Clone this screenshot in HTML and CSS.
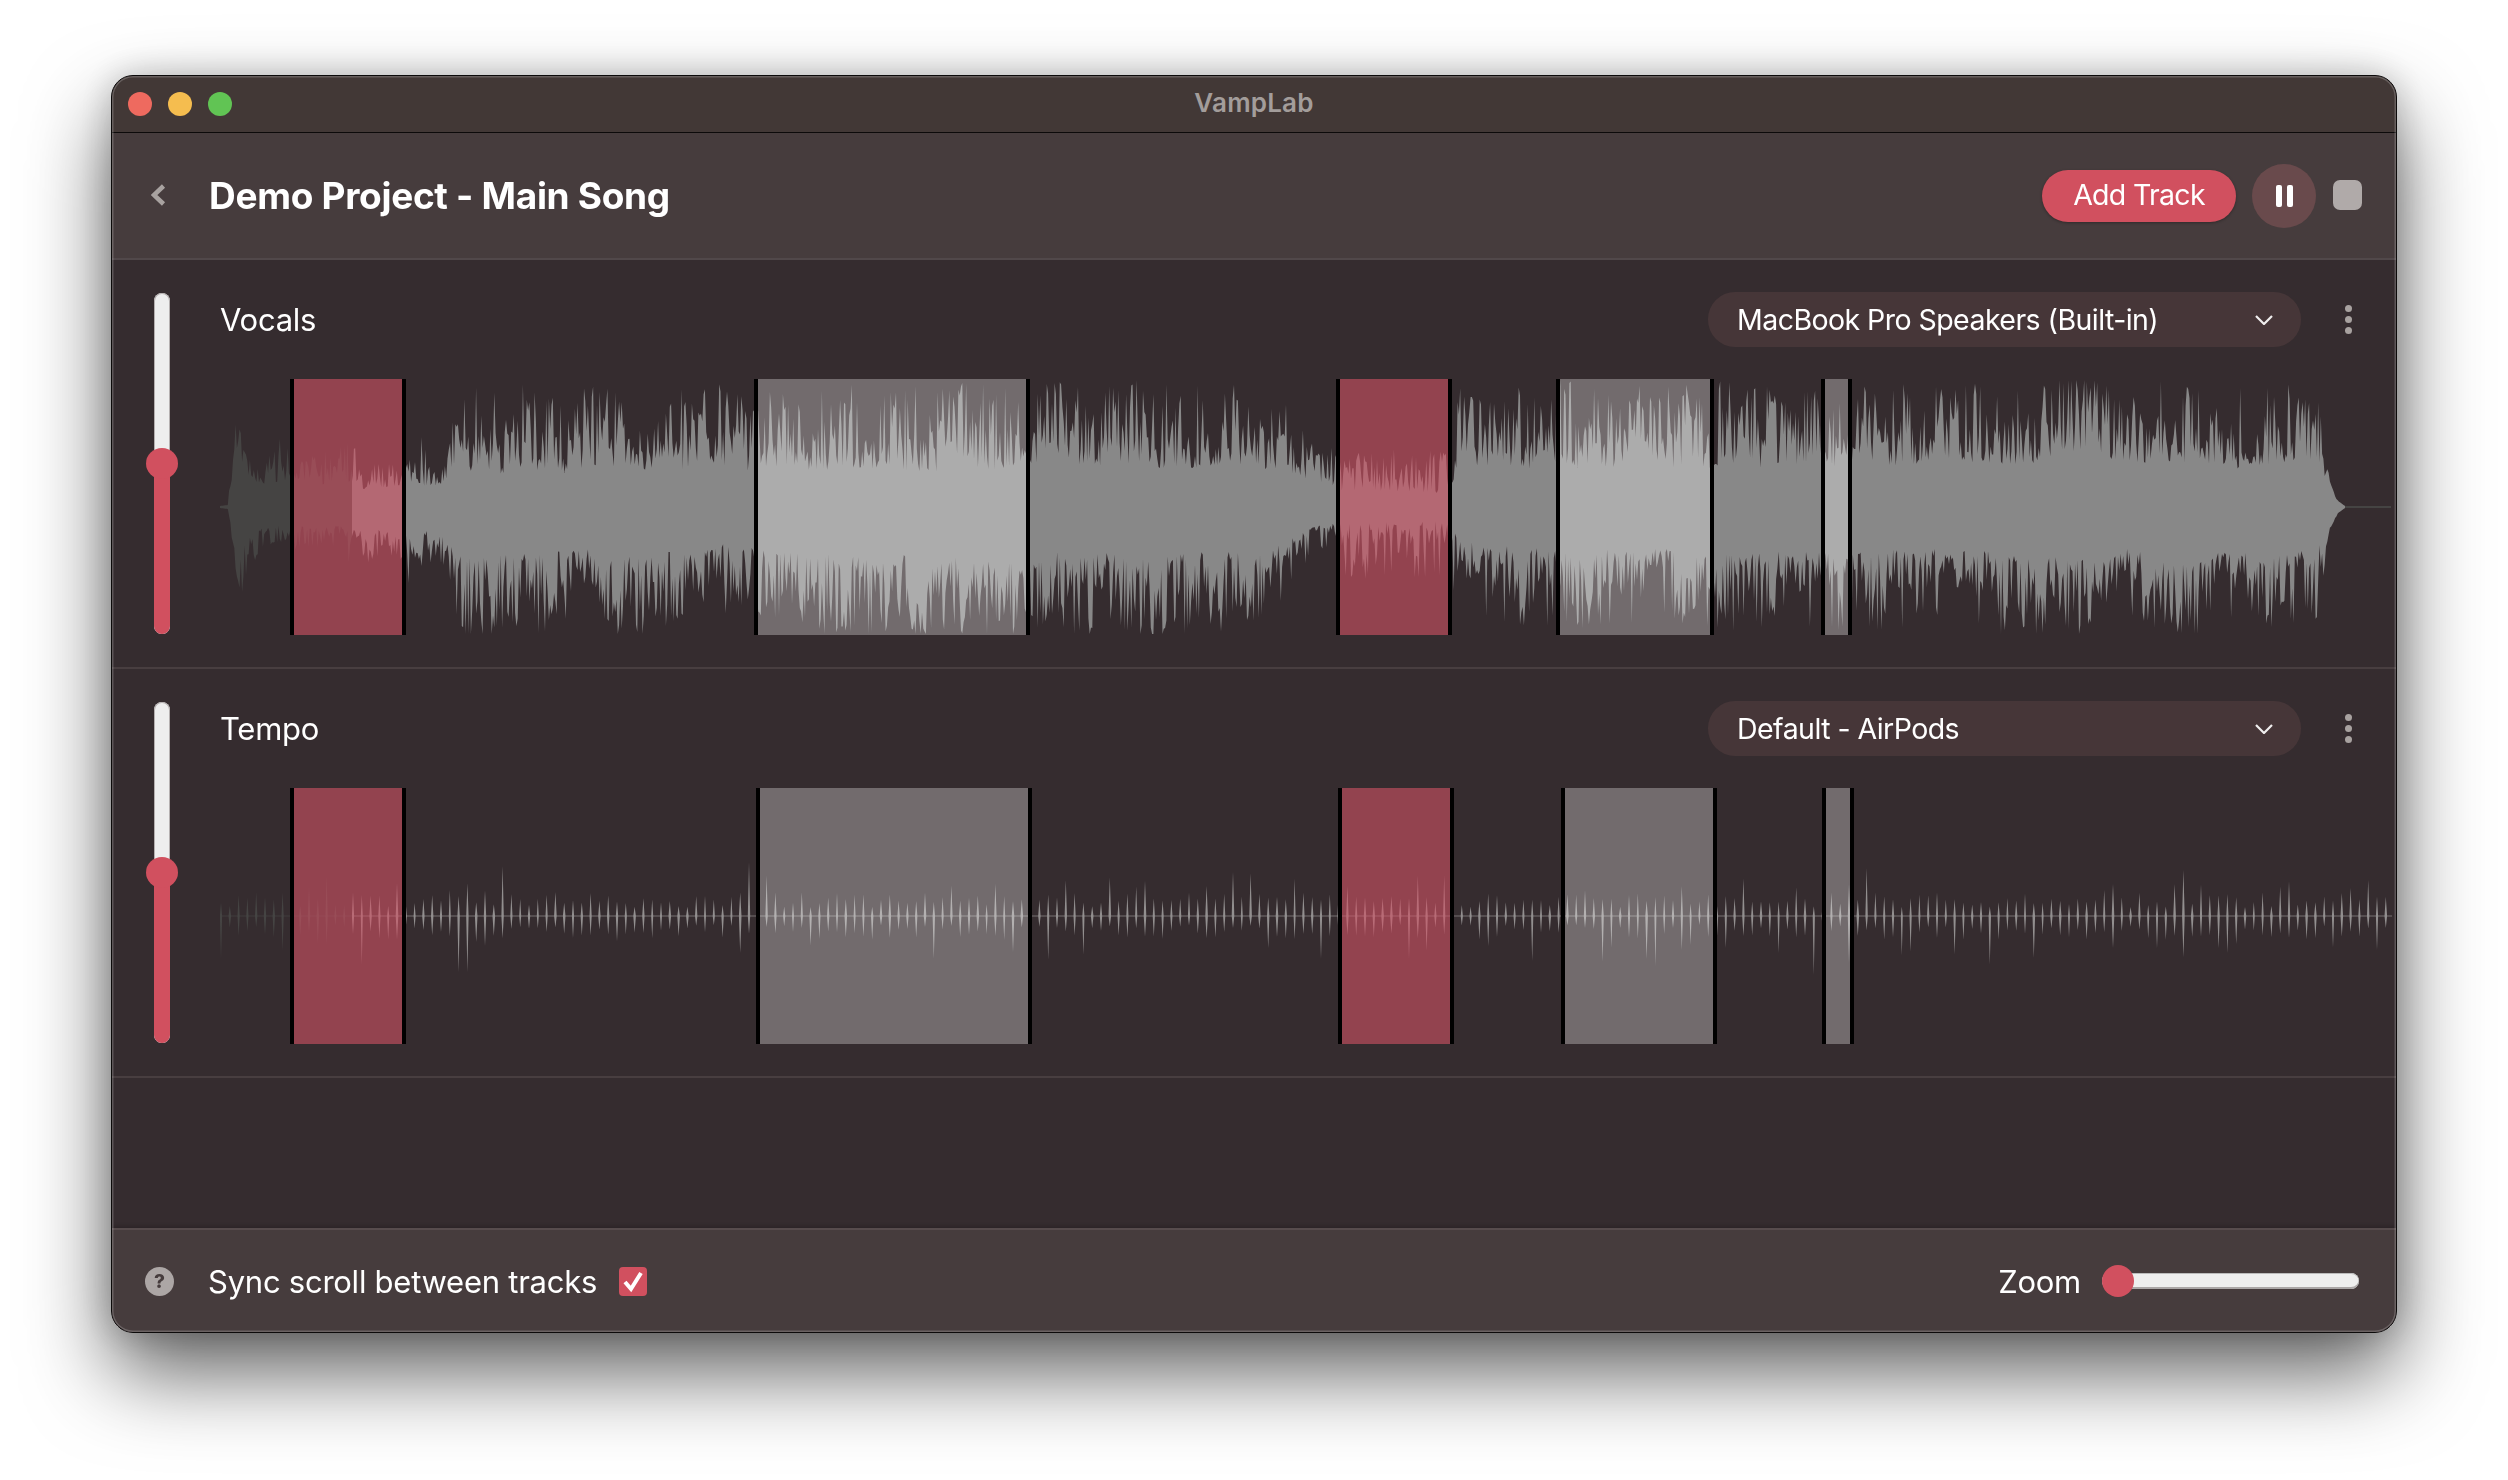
FILE: index.html
```html
<!DOCTYPE html>
<html lang="en">
<head>
<meta charset="utf-8">
<title>VampLab</title>
<link rel="stylesheet" href="styles.css">
</head>
<body>
<main class="window">
  <div class="titlebar">
    <div class="lights"><span class="light red"></span><span class="light yellow"></span><span class="light green"></span></div>
    <div class="app-name">VampLab</div>
    <div></div>
  </div>
  <header class="header">
    <svg class="back" viewBox="0 0 15 22" aria-hidden="true"><path d="M12.5 2 L3 11 L12.5 20"/></svg>
    <h1 class="title">Demo Project - Main Song</h1>
    <button class="add-track">Add Track</button>
    <button class="pause"><span class="pause-bar"></span><span class="pause-bar"></span></button>
    <div class="stop"></div>
  </header>
  <section class="tracks">
    <article class="track">
      <div class="vslider"><div class="vfill"></div><div class="vthumb"></div></div>
      <div class="track-body">
        <div class="track-head">
          <div class="track-name">Vocals</div>
          <div class="select"><span>MacBook Pro Speakers (Built-in)</span>
            <svg class="caret" viewBox="0 0 18 10" aria-hidden="true"><path d="M1 1 L9 9 L17 1"/></svg></div>
          <div class="kebab"><i></i><i></i><i></i></div>
        </div>
        <div class="wave">
          <svg class="wave-svg" id="wave-vocals" width="2172" height="256" viewBox="0 0 2172 256"></svg>
          <div class="region hot" style="left:70px;width:116px"></div>
          <div class="region" style="left:534px;width:276px"></div>
          <div class="region hot" style="left:1116px;width:116px"></div>
          <div class="region" style="left:1336px;width:158px"></div>
          <div class="region" style="left:1601px;width:31px"></div>
        </div>
      </div>
    </article>
    <article class="track">
      <div class="vslider"><div class="vfill"></div><div class="vthumb"></div></div>
      <div class="track-body">
        <div class="track-head">
          <div class="track-name">Tempo</div>
          <div class="select"><span>Default - AirPods</span>
            <svg class="caret" viewBox="0 0 18 10" aria-hidden="true"><path d="M1 1 L9 9 L17 1"/></svg></div>
          <div class="kebab"><i></i><i></i><i></i></div>
        </div>
        <div class="wave">
          <svg class="wave-svg" id="wave-tempo" width="2172" height="256" viewBox="0 0 2172 256"></svg>
          <div class="region hot" style="left:70px;width:116px"></div>
          <div class="region" style="left:536px;width:276px"></div>
          <div class="region hot" style="left:1118px;width:116px"></div>
          <div class="region" style="left:1341px;width:156px"></div>
          <div class="region" style="left:1602px;width:32px"></div>
        </div>
      </div>
    </article>
  </section>
  <footer class="footer">
    <div class="help">?</div>
    <div class="sync">Sync scroll between tracks</div>
    <div class="check"><svg viewBox="0 0 28 29" aria-hidden="true"><path d="M6 15 L12 22 L22 6"/></svg></div>
    <div class="zoom-label">Zoom</div>
    <div class="hslider"><div class="hthumb"></div></div>
  </footer>
</main>
<script src="script.js"></script>
</body>
</html>
```
FILE: styles.css
```css
* { box-sizing: border-box; }
html, body { margin: 0; height: 100%; background: #fff; }
body {
  padding: 75px 111px 147px;
  font-family: Inter, "Liberation Sans", sans-serif;
  color: #fff;
  overflow: hidden;
}
.window {
  position: relative;
  height: 1258px;
  display: flex;
  flex-direction: column;
  border: 1px solid #0c0a0a;
  border-radius: 22px;
  background: #352c2f;
  overflow: hidden;
}
.window::after {
  content: "";
  position: absolute;
  inset: 0;
  border-radius: 21px;
  box-shadow: inset 0 0 0 1.5px rgba(255, 255, 255, .2);
  pointer-events: none;
}
body::before {
  content: "";
  position: fixed;
  left: 111px;
  top: 75px;
  width: 2286px;
  height: 1258px;
  border-radius: 22px;
  box-shadow: 0 40px 84px rgba(0, 0, 0, .62), 0 0 34px rgba(0, 0, 0, .2);
}
.titlebar {
  flex: none;
  height: 57px;
  display: grid;
  grid-template-columns: 1fr auto 1fr;
  align-items: center;
  background: #423836;
  border-bottom: 1.5px solid #0c0a0a;
}
.lights { display: flex; gap: 16px; padding-left: 16px; }
.light { width: 24px; height: 24px; border-radius: 50%; }
.red { background: #ee6a5f; }
.yellow { background: #f5bd4f; }
.green { background: #61c454; }
.app-name { font-size: 26px; font-weight: 600; color: #a39d9b; letter-spacing: .2px; margin-top: -4px; }

.header {
  flex: none;
  height: 127px;
  display: flex;
  align-items: center;
  padding: 0 34px 0 39px;
  background: #463c3d;
  border-bottom: 2px solid #51484a;
}
.back { width: 15px; height: 22px; fill: none; stroke: #a8a2a0; stroke-width: 4.5; margin-top: -2px; }
.title { flex: 1; margin: 0 0 0 43px; font-size: 37px; font-weight: 700; letter-spacing: -.3px; line-height: 1; }
.add-track {
  width: 194px;
  height: 52px;
  border: 0;
  border-radius: 26px;
  background: #d1505f;
  color: #fff;
  font: 400 28.5px Inter, "Liberation Sans", sans-serif;
  letter-spacing: -.7px;
  padding: 0 0 2px;
  box-shadow: 0 1px 3px rgba(0, 0, 0, .3);
}
.pause {
  width: 64px;
  height: 64px;
  margin-left: 16px;
  border: 0;
  padding: 0;
  border-radius: 50%;
  background: #694a4c;
  display: flex;
  align-items: center;
  justify-content: center;
  gap: 5px;
}
.pause-bar { width: 6px; height: 22px; border-radius: 2px; background: #fff; }
.stop { width: 29px; height: 30px; margin: -1px 0 0 17px; border-radius: 7px; background: #b0aaa9; }

.tracks { flex: 1; min-height: 0; }
.track {
  display: flex;
  height: 409px;
  padding: 32px 4px 32px 42px;
  border-bottom: 2px solid #483e40;
}
.vslider {
  position: relative;
  flex: none;
  width: 16px;
  height: 341px;
  margin: 1px 50px 0 0;
  border-radius: 8px;
  background: #eee;
  box-shadow: inset 0 0 0 1px #b5b0b0;
}
.vfill {
  position: absolute;
  left: 0;
  right: 0;
  bottom: 0;
  height: 171px;
  background: #d1505f;
  border-radius: 0 0 8px 8px;
}
.vthumb {
  position: absolute;
  left: -8px;
  top: 155px;
  width: 32px;
  height: 31px;
  border-radius: 50%;
  background: #d1505f;
}
.track-body { flex: 1; min-width: 0; }
.track-head { display: flex; align-items: center; height: 55px; padding-right: 40px; margin-bottom: 32px; }
.track-name { flex: 1; font-size: 31px; letter-spacing: -.25px; }
.select {
  display: flex;
  align-items: center;
  justify-content: space-between;
  width: 593px;
  height: 55px;
  padding: 0 28px 0 29px;
  border-radius: 27px;
  background: #463638;
  font-size: 28.5px;
  letter-spacing: -.55px;
}
.caret { width: 18px; height: 10px; fill: none; stroke: #f0eeee; stroke-width: 2.2; margin-left: -1px; }
.kebab { display: flex; flex-direction: column; gap: 4px; margin-left: 44px; }
.kebab i { display: block; width: 7px; height: 7px; border-radius: 50%; background: #a8a2a0; }
.wave { position: relative; height: 256px; }
.wave-svg { display: block; }
.region {
  position: absolute;
  top: 0;
  bottom: 0;
  border-left: 4px solid #000;
  border-right: 4px solid #000;
  background: rgba(255, 255, 255, .3);
  background-clip: padding-box;
}
.hot { background-color: rgba(210, 84, 102, .6); }

.footer {
  flex: none;
  height: 104px;
  display: flex;
  align-items: center;
  padding: 0 37px 0 33px;
  background: #463c3d;
  border-top: 2px solid #574c4d;
  box-shadow: 0 -2px 4px rgba(0, 0, 0, .18);
  font-size: 31px;
  letter-spacing: -.25px;
}
.help {
  width: 29px;
  height: 29px;
  border-radius: 50%;
  background: #aca6a5;
  color: #463c3d;
  font-size: 19px;
  font-weight: 800;
  text-align: center;
  line-height: 29px;
}
.sync { margin-left: 34px; }
.check { width: 28px; height: 29px; margin-left: 22px; margin-right: auto; border-radius: 4px; background: #d1505f; }
.check svg { display: block; width: 28px; height: 29px; fill: none; stroke: #fff; stroke-width: 4; }
.zoom-label { margin-right: 21px; }
.hslider {
  position: relative;
  width: 257px;
  height: 16px;
  border-radius: 8px;
  background: #eee;
  box-shadow: inset 0 -2px 0 #aaa6a6, inset 0 1px 0 #bbb;
}
.hthumb {
  position: absolute;
  left: 0;
  top: -8px;
  width: 32px;
  height: 32px;
  border-radius: 50%;
  background: #d1505f;
}
```
FILE: script.js
```js
(function () {
  var NS = "http://www.w3.org/2000/svg";
  function rng(seed) {
    return function () {
      seed = (seed + 0x6d2b79f5) | 0;
      var t = Math.imul(seed ^ (seed >>> 15), 1 | seed);
      t = (t + Math.imul(t ^ (t >>> 7), 61 | t)) ^ t;
      return ((t ^ (t >>> 14)) >>> 0) / 4294967296;
    };
  }
  function el(name, attrs, parent) {
    var e = document.createElementNS(NS, name);
    for (var k in attrs) e.setAttribute(k, attrs[k]);
    parent.appendChild(e);
    return e;
  }
  function gradient(svg, id, tail, light) {
    var defs = el("defs", {}, svg);
    var g = el("linearGradient", { id: id, gradientUnits: "userSpaceOnUse", x1: 0, x2: 2172, y1: 0, y2: 0 }, defs);
    var stops = [[0, "#454443"], [132 / 2172, "#454443"], [132 / 2172, light]];
    if (tail) stops.push([2125 / 2172, light], [2125 / 2172, "#454443"], [1, "#454443"]);
    else stops.push([1, light]);
    stops.forEach(function (s) { el("stop", { offset: s[0], "stop-color": s[1] }, g); });
  }
  /* x (page px), core top, peak top, core bottom, peak bottom */
  var env = [
    [220, 1, 1, 1, 1], [228, 2, 2, 2, 2], [231, 22, 45, 18, 40], [235, 44, 95, 36, 88], [238, 50, 108, 44, 98],
    [246, 32, 62, 32, 72], [262, 22, 42, 20, 42], [282, 26, 72, 18, 36], [290, 24, 60, 22, 44],
    [300, 24, 56, 22, 44], [345, 24, 60, 20, 42], [352, 22, 96, 20, 76], [358, 18, 48, 22, 64], [400, 20, 44, 20, 50],
    [408, 26, 86, 26, 74], [428, 22, 66, 24, 58], [445, 24, 54, 28, 60], [450, 36, 104, 38, 98],
    [462, 38, 126, 44, 126], [600, 40, 126, 46, 126], [700, 38, 122, 40, 118], [750, 36, 116, 36, 112],
    [770, 36, 122, 44, 126], [1000, 40, 126, 48, 127], [1040, 44, 124, 42, 122], [1100, 40, 124, 44, 127],
    [1230, 42, 126, 46, 126], [1285, 40, 122, 40, 104], [1310, 26, 74, 24, 56], [1334, 20, 56, 18, 40],
    [1340, 16, 58, 16, 74], [1450, 14, 58, 16, 80], [1458, 38, 122, 36, 110], [1540, 40, 126, 44, 122],
    [1640, 40, 124, 46, 122], [1700, 40, 126, 46, 122], [1820, 38, 116, 44, 120], [1852, 44, 126, 46, 124],
    [2000, 44, 127, 48, 127], [2200, 44, 126, 50, 127], [2316, 44, 126, 46, 126], [2322, 32, 88, 32, 84],
    [2330, 20, 24, 18, 20], [2338, 5, 6, 5, 6], [2345, 1, 1, 1, 1], [2392, 1, 1, 1, 1]
  ];
  function sample(x, i) {
    for (var n = 0; n < env.length - 1; n++) {
      if (x <= env[n + 1][0]) {
        var t = (x - env[n][0]) / (env[n + 1][0] - env[n][0]);
        return env[n][i] + (env[n + 1][i] - env[n][i]) * Math.max(0, t);
      }
    }
    return 1;
  }
  function side(x, r, st, ci, pi) {
    var core = sample(x, ci), peak = sample(x, pi);
    if (peak < 8) return peak;
    /* a wandering burst height with tall, narrow spikes and deep cuts */
    st.a += (r() - .5) * .24; st.a *= .96;
    var burst = .8 + st.a + (Math.sin(x / 29 + st.p) + Math.sin(x / 9 + st.p * 2)) * .1;
    var reach = (peak - core) * Math.min(1, Math.max(.25, burst)) * Math.pow(r(), 1.45);
    if (r() < .12) reach = (peak - core) * (.72 + r() * .28);
    var v = core * (1 + st.a * .3) + reach;
    return Math.min(127, Math.max(1, v));
  }
  function drawVocals() {
    var svg = document.getElementById("wave-vocals");
    gradient(svg, "gv", true, "#888888");
    var r = rng(4711), top = [], bot = [], mid = 128;
    var a = { a: 0, p: 1.3 }, c = { a: 0, p: 4.1 };
    for (var x = 220; x <= 2392; x += 1.3) {
      top.push((x - 220).toFixed(1) + " " + (mid - side(x, r, a, 1, 2)).toFixed(1));
      bot.unshift((x - 220).toFixed(1) + " " + (mid + side(x, r, c, 3, 4)).toFixed(1));
    }
    el("path", { d: "M" + top.concat(bot).join("L") + "Z", fill: "url(#gv)" }, svg);
  }
  function drawTempo() {
    var svg = document.getElementById("wave-tempo");
    gradient(svg, "gt", false, "#928f8f");
    var r = rng(90210), mid = 128, d = "";
    var big = { 463: [0, 56], 506: [50, 0], 749: [54, 0], 1814: [0, 59], 1009: [0, 36], 2030: [0, 42], 1870: [48, 0], 1680: [30, 34], 2180: [46, 0] };
    for (var x = 221; x < 2392; x += 8.8) {
      var rx = Math.round(x), up = 9 + r() * 15, dn = 9 + r() * 15;
      if (r() < .18) up += 8 + r() * 14;
      if (r() < .18) dn += 8 + r() * 20;
      for (var k in big) if (Math.abs(k - rx) < 5) { if (big[k][0]) up = big[k][0]; if (big[k][1]) dn = big[k][1]; }
      var px = x - 220, w = 1 + r() * .3;
      d += "M" + px.toFixed(1) + " " + (mid - up).toFixed(1) +
           "L" + (px + w).toFixed(1) + " " + mid +
           "L" + px.toFixed(1) + " " + (mid + dn).toFixed(1) +
           "L" + (px - w).toFixed(1) + " " + mid + "Z";
    }
    el("rect", { x: 0, y: mid - .5, width: 2172, height: 1, fill: "url(#gt)", opacity: .7 }, svg);
    el("path", { d: d, fill: "url(#gt)" }, svg);
  }
  drawVocals();
  drawTempo();
})();
```
